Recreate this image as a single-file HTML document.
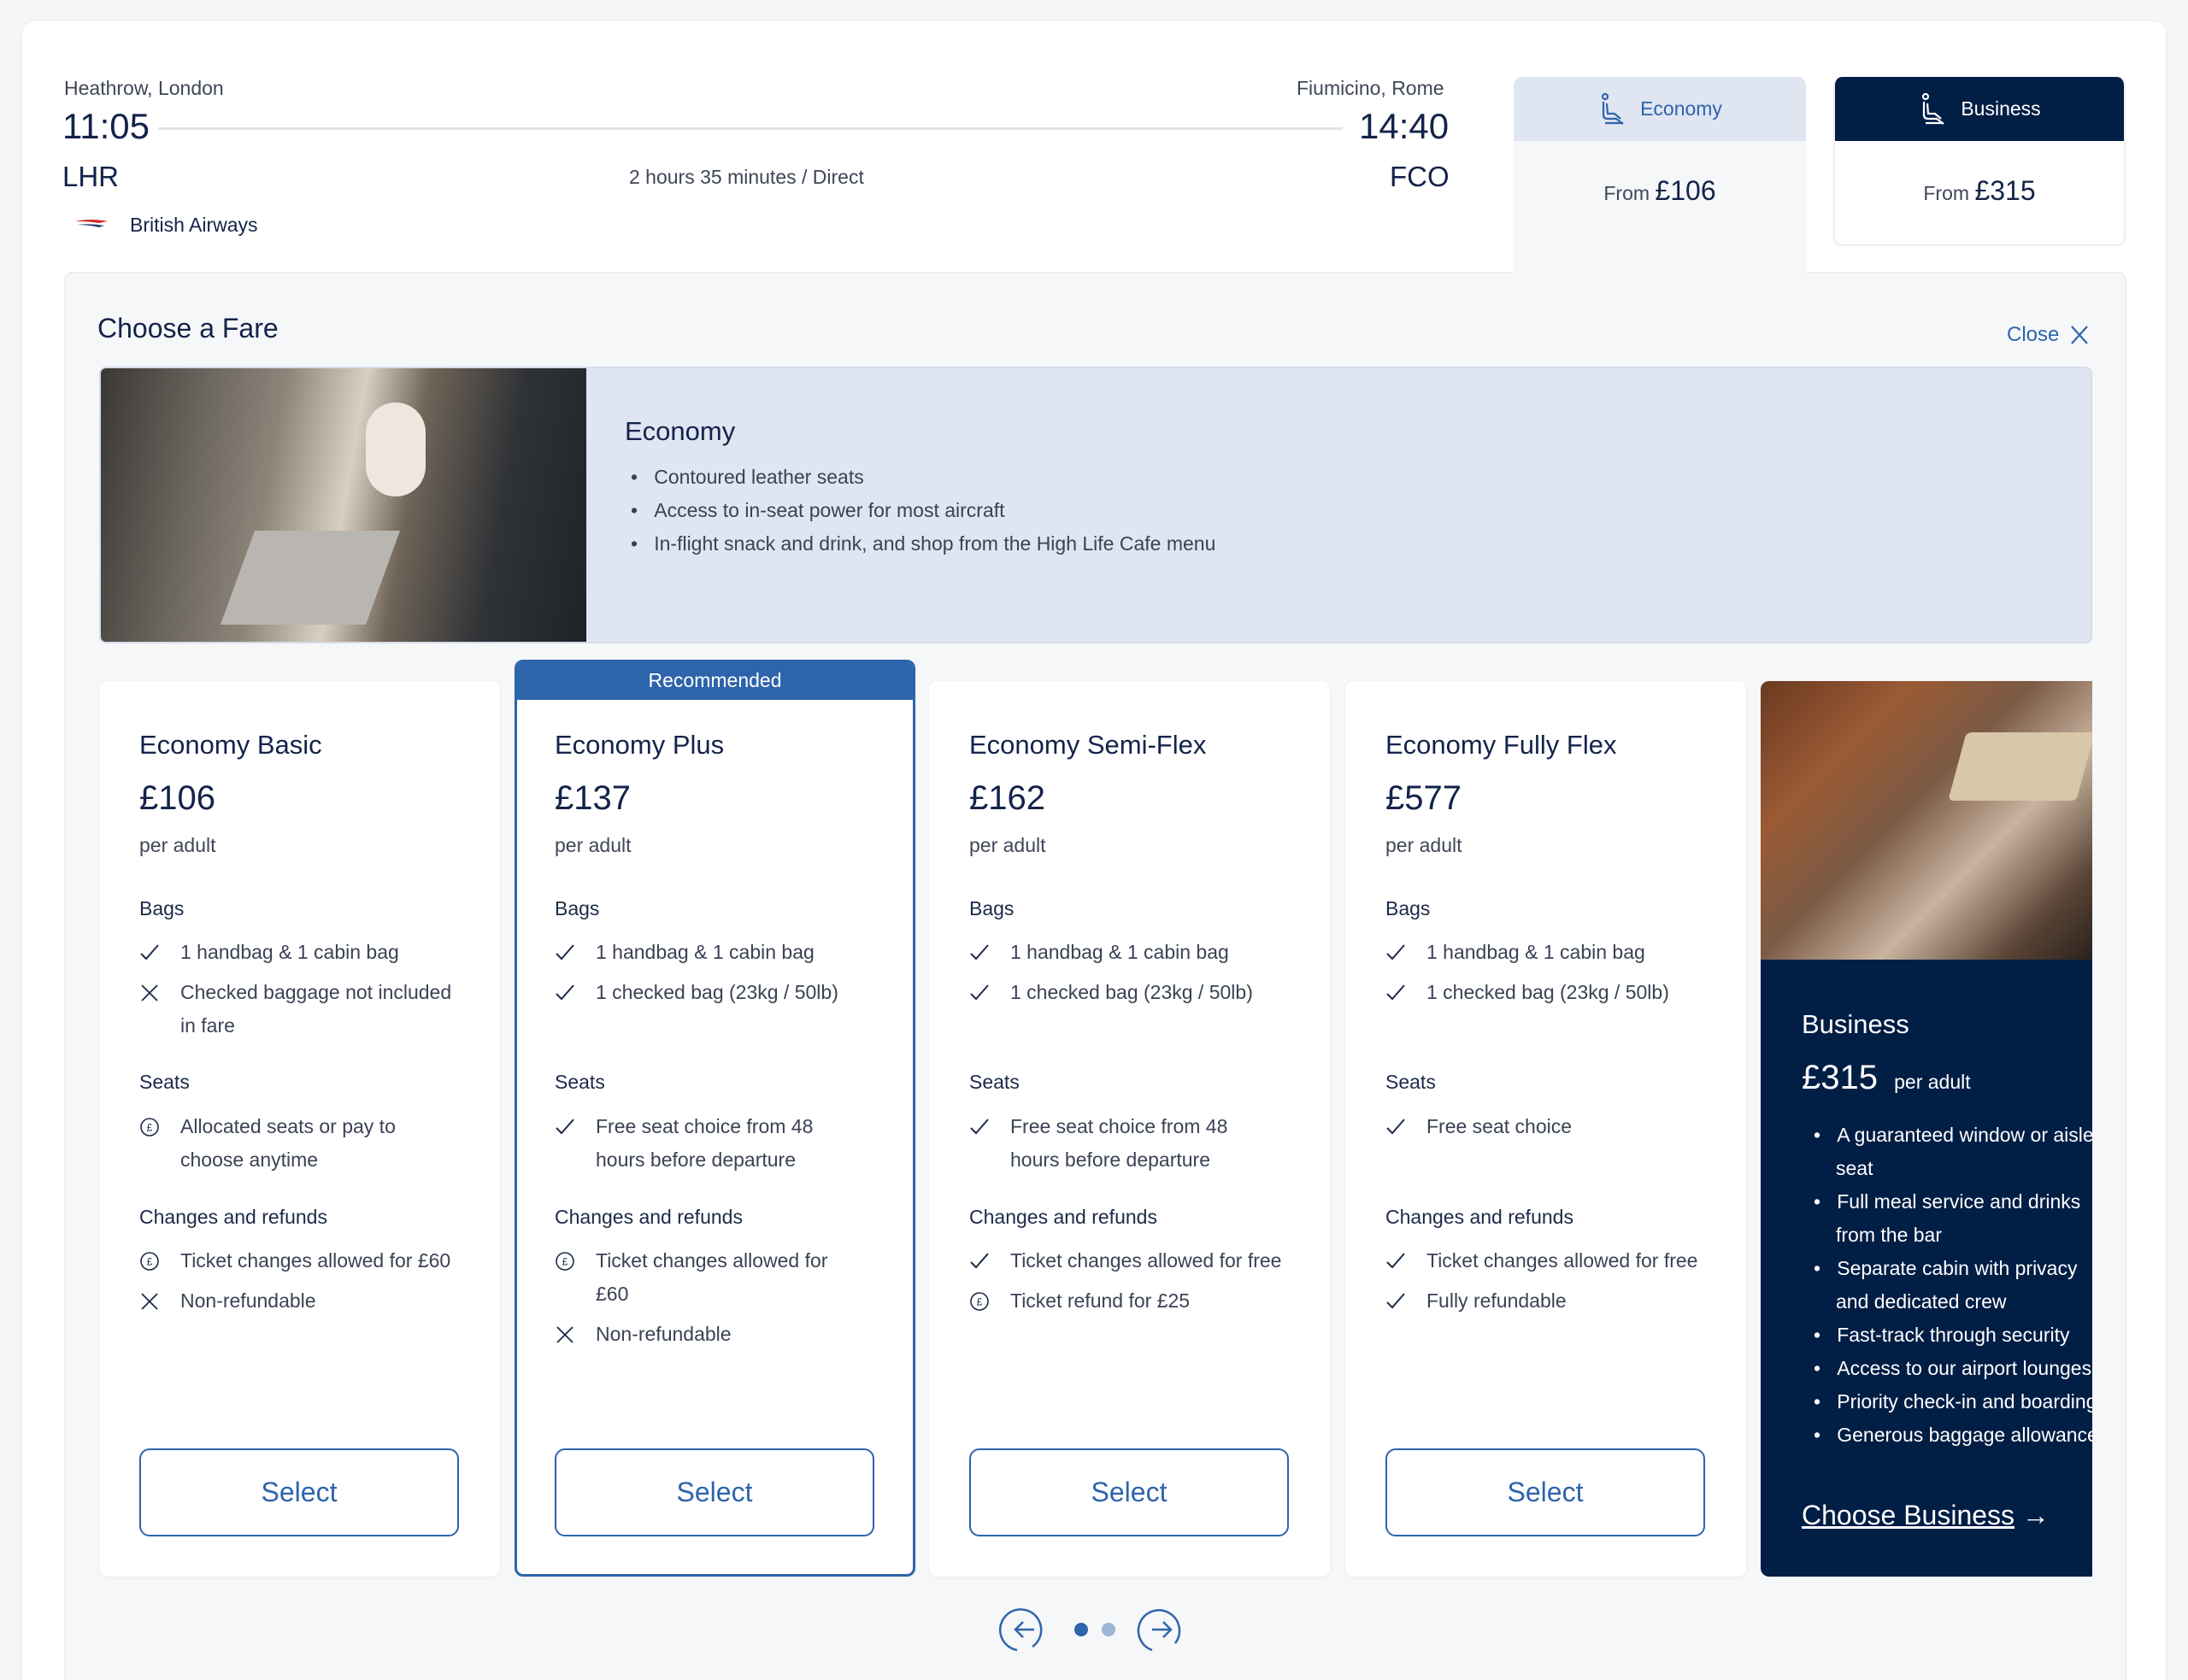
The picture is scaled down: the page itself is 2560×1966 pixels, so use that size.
<!DOCTYPE html>
<html style="width:2560px;height:1966px;overflow:hidden"><head><meta charset="utf-8">
<style>
*{box-sizing:border-box;margin:0;padding:0}
body{width:2560px;height:1966px;background:#f5f6f8;font-family:"Liberation Sans",sans-serif;color:#14234a;position:relative;overflow:hidden}
.abs{position:absolute}
.outer{position:absolute;left:26px;top:25px;width:2508px;height:1960px;background:#fff;border-radius:14px;box-shadow:0 0 4px rgba(0,0,0,.06)}
.gray{color:#3f4656}
.panel{position:absolute;left:75px;top:318px;width:2413px;height:1680px;background:#f6f7f9;border:2px solid #eceef1;border-radius:10px}
.tab{position:absolute;top:90px;width:342px;border-radius:10px 10px 0 0;overflow:hidden}
.tabh{height:75px;display:flex;align-items:center;justify-content:center;font-size:23px;gap:14px}
.card{position:absolute;top:797px;width:469px;height:1048px;background:#fff;border-radius:10px;box-shadow:0 1px 4px rgba(0,0,0,.05)}
.card .t{position:absolute;left:47px;top:55px;font-size:31px;line-height:40px}
.card .p{position:absolute;left:47px;top:113px;font-size:40px;line-height:48px}
.card .pa{position:absolute;left:47px;top:177px;font-size:23px;line-height:30px;color:#3f4656}
.card .h{position:absolute;left:47px;font-size:23px;line-height:30px;color:#1c2a48}
.card ul{position:absolute;left:47px;width:400px;list-style:none;white-space:nowrap}
.card li{position:relative;padding-left:48px;font-size:23px;line-height:39px;margin-bottom:8px;color:#3a4254}
.card li svg{position:absolute;left:0;top:8px}
.btn{position:absolute;left:47px;top:898px;width:374px;height:103px;border:2px solid #2e64ab;border-radius:12px;display:flex;align-items:center;justify-content:center;font-size:32px;color:#2e64ab}
</style></head><body>
<div class="outer"></div>
<div class="abs gray" style="left:75px;top:90px;font-size:23px">Heathrow, London</div>
<div class="abs" style="left:73px;top:124px;font-size:42px">11:05</div>
<div class="abs" style="left:185px;top:149px;width:1386px;height:3px;background:#e1e3e8"></div>
<div class="abs gray" style="left:1517px;top:90px;font-size:23px">Fiumicino, Rome</div>
<div class="abs" style="left:1590px;top:124px;font-size:42px">14:40</div>
<div class="abs" style="left:73px;top:188px;font-size:33px">LHR</div>
<div class="abs" style="left:1626px;top:188px;font-size:33px">FCO</div>
<div class="abs gray" style="left:736px;top:194px;font-size:23px">2 hours 35 minutes / Direct</div>
<svg class="abs" style="left:86px;top:254px" width="42" height="16"><path d="M2 5 Q20 1 40 5 L30 7 Q18 5 2 5Z" fill="#d42b2b"/><path d="M4 9 Q20 7 36 10 L30 12 Q18 9 4 9Z" fill="#1e3a7a"/></svg>
<div class="abs" style="left:152px;top:250px;font-size:23px">British Airways</div>

<div class="panel"></div>
<div class="tab" style="left:1771px;height:230px;background:#f6f7f9">
<div class="tabh" style="background:#dfe5f1;color:#2e64ab"><svg width="36" height="40" viewBox="0 0 36 40" fill="none" stroke="#2e64ab" stroke-width="2.2"><circle cx="9" cy="5" r="3"/><path d="M7 11 L7 26 Q7 31 12 31 L22 31 L30 37"/><path d="M11 13 L12 25 L20 25 L27 31"/><path d="M9 36 L30 36"/></svg>Economy</div>
<div style="text-align:center;margin-top:40px;font-size:23px;color:#3f4656">From <span style="font-size:32px;color:#14234a">£106</span></div>
</div>
<div class="tab" style="left:2145px;height:198px;background:#fff;border:2px solid #eceef1;border-top:none;border-radius:10px">
<div class="tabh" style="background:#011e45;color:#fff;margin:0 -2px"><svg width="36" height="40" viewBox="0 0 36 40" fill="none" stroke="#fff" stroke-width="2.2"><circle cx="9" cy="5" r="3"/><path d="M7 11 L7 26 Q7 31 12 31 L22 31 L30 37"/><path d="M11 13 L12 25 L20 25 L27 31"/><path d="M9 36 L30 36"/></svg>Business</div>
<div style="text-align:center;margin-top:40px;font-size:23px;color:#3f4656">From <span style="font-size:32px;color:#14234a">£315</span></div>
</div>

<div class="abs" style="left:114px;top:366px;font-size:32px">Choose a Fare</div>
<div class="abs" style="left:2348px;top:378px;font-size:24px;color:#2e64ab">Close</div>
<svg class="abs" style="left:2422px;top:380px" width="22" height="24"><path d="M2 2 L20 22 M20 2 L2 22" stroke="#2e64ab" stroke-width="2.2"/></svg>

<div class="abs" style="left:116px;top:429px;width:2332px;height:324px;background:#dfe5f1;border:2px solid #d6dce8;border-radius:8px;overflow:hidden">
<div style="position:absolute;left:0;top:0;width:568px;height:324px;background:linear-gradient(100deg,#3b3733 0%,#6a655e 20%,#8d8479 35%,#d9cfc4 50%,#6f6458 62%,#2f3236 80%,#1f2226 100%)">
<div style="position:absolute;left:310px;top:40px;width:70px;height:110px;border-radius:35px;background:#efe6dd"></div>
<div style="position:absolute;left:160px;top:190px;width:170px;height:110px;background:#b9b6b2;transform:skew(-20deg)"></div>
</div>
<div style="position:absolute;left:613px;top:56px;font-size:31px">Economy</div>
<ul style="position:absolute;left:620px;top:108px;list-style:none;font-size:23px;line-height:39px;color:#3a4254">
<li>•&nbsp;&nbsp;&nbsp;Contoured leather seats</li>
<li>•&nbsp;&nbsp;&nbsp;Access to in-seat power for most aircraft</li>
<li>•&nbsp;&nbsp;&nbsp;In-flight snack and drink, and shop from the High Life Cafe menu</li>
</ul>
</div>

<svg width="0" height="0" style="position:absolute"><defs>
<symbol id="ck" viewBox="0 0 24 24"><path d="M2 13 L8 19 L22 3" fill="none" stroke="#1c2a48" stroke-width="2"/></symbol>
<symbol id="x" viewBox="0 0 24 24"><path d="M3 3 L21 21 M21 3 L3 21" fill="none" stroke="#1c2a48" stroke-width="1.8"/></symbol>
<symbol id="gbp" viewBox="0 0 24 24"><circle cx="12" cy="12" r="10" fill="none" stroke="#1c2a48" stroke-width="1.6"/><text x="12" y="16.5" font-size="12" text-anchor="middle" font-family="Liberation Sans" fill="#1c2a48">£</text></symbol>
</defs></svg>

<!-- Card 1 -->
<div class="card" style="left:116px">
<div class="t">Economy Basic</div><div class="p">£106</div><div class="pa">per adult</div>
<div class="h" style="top:251px">Bags</div>
<ul style="top:298px"><li><svg width="24" height="24"><use href="#ck"/></svg>1 handbag &amp; 1 cabin bag</li><li><svg width="24" height="24"><use href="#x"/></svg>Checked baggage not included<br>in fare</li></ul>
<div class="h" style="top:454px">Seats</div>
<ul style="top:502px"><li><svg width="24" height="24"><use href="#gbp"/></svg>Allocated seats or pay to<br>choose anytime</li></ul>
<div class="h" style="top:612px">Changes and refunds</div>
<ul style="top:659px"><li><svg width="24" height="24"><use href="#gbp"/></svg>Ticket changes allowed for £60</li><li><svg width="24" height="24"><use href="#x"/></svg>Non-refundable</li></ul>
<div class="btn">Select</div>
</div>

<!-- Card 2 -->
<div class="card" style="left:602px;top:772px;height:1073px;border:3px solid #2e64ab;border-radius:10px;overflow:hidden">
<div style="height:44px;background:#2e64ab;color:#fff;font-size:23px;text-align:center;line-height:42px">Recommended</div>
<div style="position:absolute;left:-3px;top:22px;width:469px;height:1048px">
<div class="t">Economy Plus</div><div class="p">£137</div><div class="pa">per adult</div>
<div class="h" style="top:251px">Bags</div>
<ul style="top:298px"><li><svg width="24" height="24"><use href="#ck"/></svg>1 handbag &amp; 1 cabin bag</li><li><svg width="24" height="24"><use href="#ck"/></svg>1 checked bag (23kg / 50lb)</li></ul>
<div class="h" style="top:454px">Seats</div>
<ul style="top:502px"><li><svg width="24" height="24"><use href="#ck"/></svg>Free seat choice from 48<br>hours before departure</li></ul>
<div class="h" style="top:612px">Changes and refunds</div>
<ul style="top:659px"><li><svg width="24" height="24"><use href="#gbp"/></svg>Ticket changes allowed for<br>£60</li><li><svg width="24" height="24"><use href="#x"/></svg>Non-refundable</li></ul>
<div class="btn">Select</div>
</div></div>

<!-- Card 3 -->
<div class="card" style="left:1087px">
<div class="t">Economy Semi-Flex</div><div class="p">£162</div><div class="pa">per adult</div>
<div class="h" style="top:251px">Bags</div>
<ul style="top:298px"><li><svg width="24" height="24"><use href="#ck"/></svg>1 handbag &amp; 1 cabin bag</li><li><svg width="24" height="24"><use href="#ck"/></svg>1 checked bag (23kg / 50lb)</li></ul>
<div class="h" style="top:454px">Seats</div>
<ul style="top:502px"><li><svg width="24" height="24"><use href="#ck"/></svg>Free seat choice from 48<br>hours before departure</li></ul>
<div class="h" style="top:612px">Changes and refunds</div>
<ul style="top:659px"><li><svg width="24" height="24"><use href="#ck"/></svg>Ticket changes allowed for free</li><li><svg width="24" height="24"><use href="#gbp"/></svg>Ticket refund for £25</li></ul>
<div class="btn">Select</div>
</div>

<!-- Card 4 -->
<div class="card" style="left:1574px">
<div class="t">Economy Fully Flex</div><div class="p">£577</div><div class="pa">per adult</div>
<div class="h" style="top:251px">Bags</div>
<ul style="top:298px"><li><svg width="24" height="24"><use href="#ck"/></svg>1 handbag &amp; 1 cabin bag</li><li><svg width="24" height="24"><use href="#ck"/></svg>1 checked bag (23kg / 50lb)</li></ul>
<div class="h" style="top:454px">Seats</div>
<ul style="top:502px"><li><svg width="24" height="24"><use href="#ck"/></svg>Free seat choice</li></ul>
<div class="h" style="top:612px">Changes and refunds</div>
<ul style="top:659px"><li><svg width="24" height="24"><use href="#ck"/></svg>Ticket changes allowed for free</li><li><svg width="24" height="24"><use href="#ck"/></svg>Fully refundable</li></ul>
<div class="btn">Select</div>
</div>

<!-- Business -->
<div class="abs" style="left:2060px;top:797px;width:388px;height:1048px;background:#011e45;border-radius:10px 0 0 10px;overflow:hidden;color:#fff">
<div style="height:326px;background:linear-gradient(135deg,#6b3a22 0%,#9a5a34 25%,#7b5a45 45%,#c9b4a0 65%,#5a4536 85%,#2a211c 100%);position:relative">
<div style="position:absolute;left:230px;top:60px;width:150px;height:80px;background:#d8c7a8;transform:skew(-15deg);border-radius:6px"></div>
</div>
<div style="position:absolute;left:48px;top:384px;font-size:31px">Business</div>
<div style="position:absolute;left:48px;top:442px;font-size:40px">£315 <span style="font-size:23px;margin-left:8px">per adult</span></div>
<ul style="position:absolute;left:62px;top:512px;width:420px;list-style:none;font-size:23px;line-height:39px;white-space:nowrap">
<li>•&nbsp;&nbsp;&nbsp;A guaranteed window or aisle</li><li style="padding-left:26px">seat</li>
<li>•&nbsp;&nbsp;&nbsp;Full meal service and drinks</li><li style="padding-left:26px">from the bar</li>
<li>•&nbsp;&nbsp;&nbsp;Separate cabin with privacy</li><li style="padding-left:26px">and dedicated crew</li>
<li>•&nbsp;&nbsp;&nbsp;Fast-track through security</li>
<li>•&nbsp;&nbsp;&nbsp;Access to our airport lounges</li>
<li>•&nbsp;&nbsp;&nbsp;Priority check-in and boarding</li>
<li>•&nbsp;&nbsp;&nbsp;Generous baggage allowance</li>
</ul>
<div style="position:absolute;left:48px;top:958px;font-size:32px"><span style="text-decoration:underline">Choose Business</span> →</div>
</div>

<!-- pagination -->
<svg class="abs" style="left:1168px;top:1877px" width="220" height="62" viewBox="0 0 220 62">
<path d="M40 50 A24 24 0 1 0 22 54" fill="none" stroke="#2e64ab" stroke-width="2.5"/>
<path d="M42 30 L20 30 M29 21 L20 30 L29 39" fill="none" stroke="#2e64ab" stroke-width="2.5"/>
<circle cx="97" cy="30" r="8" fill="#2e64ab"/>
<circle cx="129" cy="30" r="8" fill="#9db4d6"/>
<path d="M207 46 A24 24 0 1 0 180 54" fill="none" stroke="#2e64ab" stroke-width="2.5"/>
<path d="M180 30 L202 30 M193 21 L202 30 L193 39" fill="none" stroke="#2e64ab" stroke-width="2.5"/>
</svg>
</body></html>
